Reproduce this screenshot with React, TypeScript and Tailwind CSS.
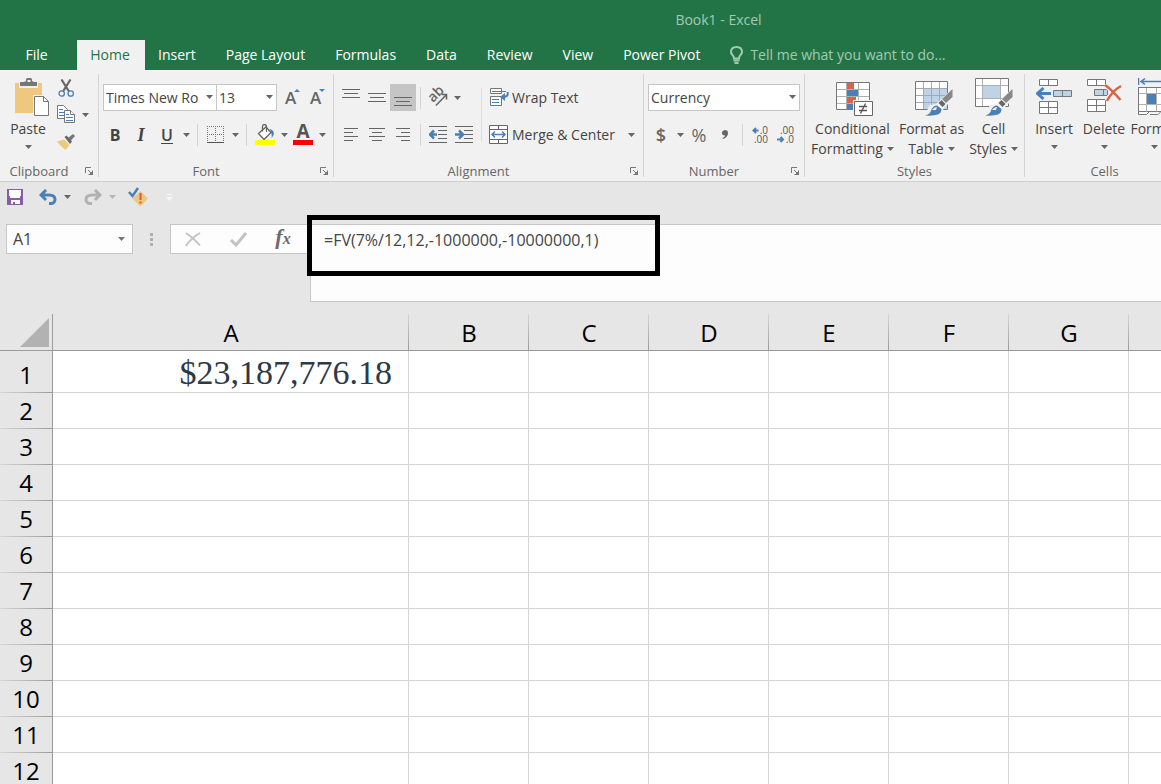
import React, { useState } from "react";

const COLUMNS = ["A", "B", "C", "D", "E", "F", "G", ""];
const ROWS = Array.from({ length: 12 }, (_, i) => i + 1);
const TABS = ["Insert", "Page Layout", "Formulas", "Data", "Review", "View", "Power Pivot"];

const Caret = ({ className = "fill-[#666]" }: { className?: string }) => (
  <svg width="7" height="4" viewBox="0 0 7 4" className={`shrink-0 ${className}`}>
    <path d="M0 0h7L3.500 4z" />
  </svg>
);

const CaretButton = ({ label, faint }: { label: string; faint?: boolean }) => (
  <button type="button" aria-label={label} className="flex h-[27px] w-3 items-center justify-center">
    <Caret className={faint ? "fill-[#b5b5b5]" : "fill-[#666]"} />
  </button>
);

interface IconButtonProps {
  label: string;
  active?: boolean;
  children: React.ReactNode;
}

const IconButton = ({ label, active, children }: IconButtonProps) => (
  <button
    type="button"
    aria-label={label}
    className={`flex h-[27px] w-[26px] shrink-0 items-center justify-center ${active ? "bg-[#c5c5c5]" : ""}`}
  >
    {children}
  </button>
);

const Separator = ({ className = "mx-1" }: { className?: string }) => (
  <span className={`h-[22px] w-px shrink-0 bg-[#d4d4d4] ${className}`} />
);

interface ComboProps {
  label: string;
  value: string;
  className: string;
}

const Combo = ({ label, value, className }: ComboProps) => (
  <div className={`relative h-[27px] ${className}`}>
    <select
      aria-label={label}
      className="h-full w-full appearance-none overflow-hidden border border-[#c6c6c6] bg-white pr-[18px] pl-[2px] text-sm text-[#444]"
    >
      <option>{value}</option>
    </select>
    <Caret className="pointer-events-none absolute top-[11px] right-1 fill-[#666]" />
  </div>
);

interface GroupProps {
  title: string;
  launcher?: boolean;
  className?: string;
  children: React.ReactNode;
}

const Group = ({ title, launcher, className = "", children }: GroupProps) => (
  <section aria-label={title} className={`flex shrink-0 pt-1 ${className}`}>
    <div className="flex min-w-0 grow flex-col pb-[2px]">
      <div className="flex grow px-1">{children}</div>
      <div className="flex h-4 items-center">
        <span className="grow text-center text-[13px] leading-4 text-[#666]">{title}</span>
        {launcher && (
          <button type="button" aria-label={`${title} settings`} className="w-5 pl-[7px]">
            <svg width="8" height="8" viewBox="0 0 8 8" fill="none" stroke="#777">
              <path d="M.5 6V.5H6M3 3l3.500 3.500M7.500 3.500v4h-4" />
              <path d="M7.500 4.500v3h-3z" fill="#777" />
            </svg>
          </button>
        )}
      </div>
    </div>
    <span className="mb-1 w-px bg-[#d4d4d4]" />
  </section>
);

interface BigButtonProps {
  icon: React.ReactNode;
  lines: string[];
  className: string;
}

// Tall ribbon button: a single line puts its caret below, two lines put it beside the second
const BigButton = ({ icon, lines, className }: BigButtonProps) => (
  <button
    type="button"
    className={`flex shrink-0 flex-col items-center pt-1 text-sm leading-5 whitespace-nowrap text-[#444] ${className}`}
  >
    <span className="flex h-[41px] items-start">{icon}</span>
    <span>{lines[0]}</span>
    {lines.length > 1 ? (
      <span className="flex items-center gap-1">
        {lines[1]}
        <Caret />
      </span>
    ) : (
      <span className="flex h-4 items-center">
        <Caret />
      </span>
    )}
  </button>
);

const PasteIcon = () => (
  <svg width="34" height="38" viewBox="0 0 34 38">
    <path d="M0 5h27v30H0z" fill="#edc87e" />
    <path d="M4 3h19v7H4z" fill="#f1f1f1" />
    <path d="M5 4h4l2-1V1.500Q11 0 12.500 0h3Q17 0 17 1.500V3l2 1h3v4H5z" fill="#777" />
    <path d="M12.500 2h3v2h-3z" fill="#f1f1f1" />
    <path d="M18 17h16v21H18z" fill="#f1f1f1" />
    <path d="M19.500 18.500h9l5 5v14h-14z" fill="#fff" stroke="#777" />
    <path d="M28.500 18.500v5h5" fill="none" stroke="#777" />
  </svg>
);

const CutIcon = () => (
  <svg width="17" height="18" viewBox="0 0 17 18" fill="none">
    <path d="M3.500.5l7.500 12M12.500.5l-7.500 12" stroke="#666" strokeWidth="2.200" />
    <circle cx="3.700" cy="14.500" r="2.700" stroke="#4a80b8" strokeWidth="1.300" />
    <circle cx="12.700" cy="14.500" r="2.700" stroke="#4a80b8" strokeWidth="1.300" />
  </svg>
);

const CopyIcon = () => (
  <svg width="18" height="19" viewBox="0 0 18 19" fill="#fff" stroke="#777">
    <path d="M.5.5h6l4 4v9H.5z" />
    <path d="M2 4.500h4M2 7.500h5M2 10.500h5" stroke="#4a80b8" />
    <path d="M7.500 5.500h6l4 4v8h-10z" />
    <path d="M13.500 5.500v4h4" />
    <path d="M9 9.500h3M9 12.500h7M9 15.500h7" stroke="#4a80b8" />
  </svg>
);

const BrushIcon = () => (
  <svg width="18" height="16" viewBox="0 0 18 16">
    <path d="M0 7.500L7 5.500l5.500 5.500L8.500 16Q4 13 0 7.500z" fill="#edc87e" />
    <path d="M7.500 3l2-1.500 5.500 6-2 2.500z" fill="#666" />
    <path d="M11 4l5-4 2 2-4.500 5z" fill="#777" />
  </svg>
);

// Horizontal rules given as [x1, x2] pairs
const Lines = ({ spans, top }: { spans: number[][]; top: number }) => (
  <svg width="18" height="20" viewBox="0 0 18 20" stroke="#666" shapeRendering="crispEdges">
    {spans.map(([from, to], i) => (
      <path key={i} d={`M${from} ${top + i * 4 + 0.5}H${to}`} />
    ))}
  </svg>
);

const ArrowIndent = ({ right }: { right?: boolean }) => (
  <svg width="18" height="17" viewBox="0 0 18 17" fill="none" stroke="#666">
    <path d="M0 .5h18M9 4.500h9M9 8.500h9M9 12.500h9M0 16.500h18" />
    <path
      d={right ? "M0 8.500h7M4 4.500l4 4-4 4" : "M1.500 8.500H8M5 4.500l-4 4 4 4"}
      stroke="#4a80b8"
      strokeWidth="2.500"
    />
  </svg>
);

const OrientationIcon = () => (
  <svg width="20" height="19" viewBox="0 0 20 19" className="overflow-visible">
    <text
      x="5"
      y="15"
      fontSize="14"
      fontWeight="600"
      fill="#666"
      transform="rotate(-45 5 15)"
      fontFamily="Open Sans, sans-serif"
    >
      ab
    </text>
    <path d="M8 17.500L18 7M13.500 6.500H18.500V11.500" fill="none" stroke="#666" strokeWidth="1.600" />
  </svg>
);

const WrapIcon = () => (
  <svg width="20" height="19" viewBox="0 0 20 19" fill="none" stroke="#777">
    <path d="M1.500.5h11v5h-11zM1.500 8.500h11v9h-11z" fill="#fff" />
    <path d="M3 3.500h14M3 11.500h7M3 14.500h7" stroke="#4a80b8" />
    <path d="M18.500 4q1.500 5-5 5" stroke="#4a80b8" strokeWidth="2" />
    <path d="M16 5l-5 4 5 4z" fill="#4a80b8" stroke="none" />
  </svg>
);

const MergeIcon = () => (
  <svg width="20" height="19" viewBox="0 0 20 19" fill="none" stroke="#666">
    <path d="M.5.5h18v18H.5z" fill="#fff" />
    <path d="M0 4.500h19M0 14.500h19M9.500 0v4M9.500 15v4" />
    <path d="M3 9.500h13M6 6.500l-3 3 3 3M13 6.500l3 3-3 3" stroke="#4a80b8" strokeWidth="1.500" />
  </svg>
);

const BordersIcon = () => (
  <svg width="18" height="18" viewBox="0 0 18 18" stroke="#777" shapeRendering="crispEdges">
    <path d="M0 .5h18M0 8.500h18M.5 0v16M8.500 0v16M16.500 0v16" strokeDasharray="1 1" fill="none" />
    <path d="M0 16.500h17" stroke="#555" />
  </svg>
);

const FillIcon = () => (
  <svg width="20" height="21" viewBox="0 0 20 21">
    <path d="M3.500 9.500L11 3l5 5.500-7 7z" fill="#fff" stroke="#666" strokeWidth="1.300" />
    <path d="M7.500 7.500V3q0-2.500 2-2.500t2 2.500v5" fill="none" stroke="#666" strokeWidth="1.300" />
    <path d="M14.500 5q5 1 4.300 5.500l-2 3.500q0-6-2.300-9z" fill="#4a80b8" />
    <path d="M0 16h20v5H0z" fill="#ff0" />
  </svg>
);

const FontColorIcon = () => (
  <svg width="20" height="21" viewBox="0 0 20 21" className="overflow-visible">
    <text x="10" y="14" textAnchor="middle" fontSize="19" fontWeight="700" fill="#555" fontFamily="Open Sans, sans-serif">
      A
    </text>
    <path d="M0 16h20v5H0z" fill="#f00" />
  </svg>
);

const FontSizeIcon = ({ down }: { down?: boolean }) => (
  <svg width="18" height="20" viewBox="0 0 18 20" className="overflow-visible">
    <text x={down ? 1 : 2} y="16" fontSize="17" fontWeight="600" fill="#666" fontFamily="Open Sans, sans-serif">
      A
    </text>
    <path d={down ? "M10 1h6l-3 3z" : "M11 4h6l-3-3z"} fill="#4a80b8" />
  </svg>
);

const DecimalIcon = ({ decrease }: { decrease?: boolean }) => (
  <svg
    width="18"
    height="20"
    viewBox="0 0 18 20"
    fontSize="10"
    fill="#555"
    fontFamily="Open Sans, sans-serif"
    className="overflow-visible"
  >
    <text x="17" y="9" textAnchor="end">
      {decrease ? ".00" : ".0"}
    </text>
    <text x="17" y="18" textAnchor="end">
      {decrease ? ".0" : ".00"}
    </text>
    <path
      d={decrease ? "M0 14.500h6M3.500 12l2.500 2.500L3.500 17" : "M7.500 5.500H2M5 3L2.500 5.500 5 8"}
      fill="none"
      stroke="#4a80b8"
      strokeWidth="2"
    />
  </svg>
);

const ConditionalIcon = () => (
  <svg width="37" height="38" viewBox="0 0 37 38">
    <path d="M.5 4.500h33v27H.5z" fill="#fff" />
    <path d="M11 5h7v6h-7zM11 19h9v6h-9z" fill="#db6346" />
    <path d="M11 12h11v6H11zM11 26h7v5h-7z" fill="#4a80b8" />
    <path d="M1 11.500h32M1 18.500h32M1 25.500h32M10.500 5v26M22.500 5v26" stroke="#b0b0b0" />
    <path d="M.5 4.500h33v27H.5z" fill="none" stroke="#777" />
    <path d="M17 22h20v16H17z" fill="#f1f1f1" />
    <path d="M18.500 23.500h18v14h-18z" fill="#fff" stroke="#666" />
    <path d="M23 28.500h8M23 32.500h8M29.500 25.500l-5 10" stroke="#555" strokeWidth="1.300" />
  </svg>
);

const StyleBrush = () => (
  <>
    <path d="M38 10L21 26l-6 1-6 11h16l4-8 9-9z" fill="#f1f1f1" />
    <path d="M37.500 11v8l-6.500 6-4-4z" fill="#888" />
    <path d="M26.500 22l4 4-3 3-4-4z" fill="#666" />
    <path d="M10 37.500q5-1 6-5 2-5 6-5l4.500 3.500q0 4-3.500 5.500-4 1.500-13 1z" fill="#4a80b8" />
    <path d="M17 32q2-3 5-3l-1 3z" fill="#f1f1f1" />
  </>
);

const FormatTableIcon = () => (
  <svg width="38" height="38" viewBox="0 0 38 38">
    <path d="M.5 3.500h32v28H.5z" fill="#fff" />
    <path d="M9 11h23v20H9z" fill="#bfd3e8" />
    <path d="M1 10.500h31M1 17.500h31M1 24.500h31M8.500 4v27M16.500 4v27M24.500 4v27" stroke="#a8a8a8" />
    <path d="M.5 3.500h32v28H.5z" fill="none" stroke="#777" />
    <StyleBrush />
  </svg>
);

const CellStylesIcon = () => (
  <svg width="38" height="38" viewBox="0 0 38 38">
    <path d="M.5.5h33v28H.5z" fill="#fff" />
    <path d="M8 8h18v13H8z" fill="#bfd3e8" />
    <path d="M1 7.500h32M1 20.500h32M7.500 1v27M25.500 1v27" stroke="#b0b0b0" />
    <path d="M.5.5h33v28H.5z" fill="none" stroke="#777" />
    <StyleBrush />
  </svg>
);

const InsertIcon = () => (
  <svg width="36" height="38" viewBox="0 0 36 38" fill="#fff" stroke="#777">
    <path d="M3.500 1.500h18v6h-18zM12.500 1.500v6M3.500 23.500h18v12h-18zM12.500 23.500v12M3.500 29.500h18" />
    <path d="M17.500 12.500h18v6h-18zM26.500 12.500v6" fill="#bfd3e8" />
    <path d="M15 15.500H2M7.500 10l-6 5.500 6 5.500" fill="none" stroke="#4a80b8" strokeWidth="3" />
  </svg>
);

const DeleteIcon = () => (
  <svg width="36" height="38" viewBox="0 0 36 38" fill="#fff" stroke="#777">
    <path d="M1.500 1.500h18v6h-18zM10.500 1.500v6M1.500 21.500h18v12h-18zM10.500 21.500v12M1.500 27.500h18" />
    <path d="M8.500 11.500h13v6h-13zM17.500 11.500v6" fill="#bfd3e8" />
    <path d="M19 7q7 5 15.500 15M35 8q-9 5-14 15" fill="none" stroke="#f1f1f1" strokeWidth="5" />
    <path d="M19 7q7 5 15.500 15M35 8q-9 5-14 15" fill="none" stroke="#db6346" strokeWidth="2.500" />
  </svg>
);

const FormatIcon = () => (
  <svg width="36" height="38" viewBox="0 0 36 38" fill="#fff" stroke="#777">
    <path d="M.5 0v7M3 3.500h29M7 .5l-4 3 4 3M29 .5l4 3-4 3M35.500 0v7" fill="none" stroke="#4a80b8" strokeWidth="1.500" />
    <path d="M.5 9.500h34v24H.5zM.5 33.500v3h8l3-3M12 36.500h8l3-3" />
    <path d="M.5 15.500h34M.5 26.500h34M8.500 9.500v24M18.500 9.500v24M27.500 9.500v24" stroke="#b0b0b0" />
    <path d="M.5 33V9.500h34V33" fill="none" />
    <path d="M9 16h9v10H9z" fill="#4a80b8" stroke="none" />
  </svg>
);

const Header = () => (
  <header className="bg-[#227447] text-sm text-white">
    <h1 className="h-10 pl-[276px] text-center leading-10 text-[#a3c9b2]">Book1 - Excel</h1>
    <nav className="flex h-[30px] items-stretch whitespace-nowrap">
      <button type="button" className="w-[77px] pr-1">
        File
      </button>
      <button type="button" className="w-[68px] bg-[#f1f1f1] pr-[2px] text-[#227447]">
        Home
      </button>
      <div className="-ml-[2px] flex">
        {TABS.map((tab) => (
          <button key={tab} type="button" className="px-[15px]">
            {tab}
          </button>
        ))}
      </div>
      <label className="flex grow items-center gap-[7px] pl-[15px]">
        <svg width="13" height="18" viewBox="0 0 13 18" fill="none" stroke="#a3c9b2" strokeWidth="2">
          <path d="M4 12.500Q4 10.500 2.500 9 1 7.500 1 6q0-5 5.500-5T12 6q0 1.500-1.500 3Q9 10.500 9 12.500z" />
          <path d="M3.500 14.500h6M4.500 17h4" />
        </svg>
        <input
          aria-label="Tell me what you want to do"
          placeholder="Tell me what you want to do..."
          className="w-60 bg-transparent placeholder:text-[#a3c9b2] focus:outline-none"
        />
      </label>
    </nav>
  </header>
);

const Ribbon = () => (
  <div className="flex h-28 overflow-hidden border-b border-[#cfcfcf] bg-[#f1f1f1]">
    <Group title="Clipboard" launcher className="w-[99px]">
      <BigButton className="w-12" icon={<span className="pl-2"><PasteIcon /></span>} lines={["Paste"]} />
      <div className="flex flex-col pl-px">
        <IconButton label="Cut"><CutIcon /></IconButton>
        <div className="flex">
          <IconButton label="Copy"><CopyIcon /></IconButton>
          <CaretButton label="Copy options" />
        </div>
        <IconButton label="Format Painter"><BrushIcon /></IconButton>
      </div>
    </Group>

    <Group title="Font" launcher className="w-[235px]">
      <div className="flex flex-col gap-[10px] pt-[10px]">
        <div className="flex">
          <Combo label="Font name" value="Times New Roman" className="w-[114px]" />
          <Combo label="Font size" value="13" className="-ml-px w-[61px]" />
          <span className="w-[2px]" />
          <IconButton label="Increase font size"><FontSizeIcon /></IconButton>
          <IconButton label="Decrease font size"><FontSizeIcon down /></IconButton>
        </div>
        <div className="-ml-px flex items-center text-base text-[#444]">
          <IconButton label="Bold"><b>B</b></IconButton>
          <IconButton label="Italic"><i className="font-['Liberation_Serif',serif] text-lg font-bold">I</i></IconButton>
          <IconButton label="Underline"><u className="font-semibold underline-offset-2">U</u></IconButton>
          <CaretButton label="Underline style" />
          <Separator className="mx-[5px]" />
          <IconButton label="Borders"><BordersIcon /></IconButton>
          <CaretButton label="Border style" />
          <Separator className="mx-[5px]" />
          <IconButton label="Fill color"><FillIcon /></IconButton>
          <CaretButton label="Fill color options" />
          <IconButton label="Font color"><FontColorIcon /></IconButton>
          <CaretButton label="Font color options" />
        </div>
      </div>
    </Group>

    <Group title="Alignment" launcher className="w-[310px]">
      <div className="flex flex-col gap-[10px] pt-[10px]">
        <div className="flex items-center">
          <IconButton label="Top align"><Lines top={1} spans={[[0, 18], [2, 16], [0, 18]]} /></IconButton>
          <IconButton label="Middle align"><Lines top={5} spans={[[0, 18], [2, 16], [0, 18]]} /></IconButton>
          <IconButton label="Bottom align" active><Lines top={9} spans={[[0, 18], [2, 16], [0, 18]]} /></IconButton>
          <Separator />
          <IconButton label="Orientation"><OrientationIcon /></IconButton>
          <CaretButton label="Orientation options" />
        </div>
        <div className="flex items-center">
          <IconButton label="Align left"><Lines top={3} spans={[[2, 16], [2, 11], [2, 16], [2, 11]]} /></IconButton>
          <IconButton label="Center"><Lines top={3} spans={[[1, 17], [4, 14], [1, 17], [4, 14]]} /></IconButton>
          <IconButton label="Align right"><Lines top={3} spans={[[2, 16], [7, 16], [2, 16], [7, 16]]} /></IconButton>
          <Separator />
          <IconButton label="Decrease indent"><ArrowIndent /></IconButton>
          <IconButton label="Increase indent"><ArrowIndent right /></IconButton>
        </div>
      </div>
      <span className="mx-1 mt-[14px] h-[54px] w-px bg-[#dedede]" />
      <div className="flex grow flex-col gap-[10px] pt-[10px] pl-[3px] text-sm text-[#444]">
        <button type="button" className="flex h-[27px] items-center gap-[3px]">
          <WrapIcon />
          Wrap Text
        </button>
        <div className="flex items-center justify-between pr-[2px]">
          <button type="button" className="flex h-[27px] items-center gap-[3px]">
            <MergeIcon />
            Merge &amp; Center
          </button>
          <CaretButton label="Merge options" />
        </div>
      </div>
    </Group>

    <Group title="Number" launcher className="w-[161px]">
      <div className="flex grow flex-col gap-[10px] pt-[10px]">
        <Combo label="Number format" value="Currency" className="w-full" />
        <div className="flex items-center text-lg text-[#666]">
          <IconButton label="Accounting format"><span className="font-semibold">$</span></IconButton>
          <CaretButton label="Accounting options" />
          <IconButton label="Percent style">%</IconButton>
          <IconButton label="Comma style">
            <svg width="6" height="9" viewBox="0 0 6 9" fill="#666">
              <path d="M3 0q3 0 3 3 0 4-5 6L.500 8Q3 7 3 5.500 0 5.500 0 3t3-3z" />
            </svg>
          </IconButton>
          <Separator />
          <IconButton label="Increase decimal"><DecimalIcon /></IconButton>
          <IconButton label="Decrease decimal"><DecimalIcon decrease /></IconButton>
        </div>
      </div>
    </Group>

    <Group title="Styles" className="w-[220px]">
      <BigButton className="w-[87px]" icon={<span className="pl-1"><ConditionalIcon /></span>} lines={["Conditional", "Formatting"]} />
      <BigButton className="w-[71px]" icon={<span className="pl-1"><FormatTableIcon /></span>} lines={["Format as", "Table"]} />
      <BigButton className="w-[53px]" icon={<CellStylesIcon />} lines={["Cell", "Styles"]} />
    </Group>

    <Group title="Cells" className="w-[160px]">
      <BigButton className="w-[50px]" icon={<InsertIcon />} lines={["Insert"]} />
      <BigButton className="w-[50px]" icon={<DeleteIcon />} lines={["Delete"]} />
      <BigButton className="w-[50px]" icon={<span className="pl-1"><FormatIcon /></span>} lines={["Format"]} />
    </Group>
  </div>
);

const QuickAccess = () => (
  <div className="flex h-8 items-center px-[2px] pb-[2px]">
    <IconButton label="Save">
      <svg width="16" height="16" viewBox="0 0 16 16">
        <path d="M0 0h16v16H0z" fill="#8a5bab" />
        <path d="M2 1h12v8H2zM4 11h9v4H8v-2H6v2H4z" fill="#fdfdfd" />
        <path d="M2 7h1v2H2zM13 7h1v2h-1z" fill="#8a5bab" />
      </svg>
    </IconButton>
    <span className="w-[7px]" />
    <IconButton label="Undo">
      <svg width="18" height="16" viewBox="0 0 18 16" fill="none" stroke="#4a80b8" strokeWidth="3">
        <path d="M7 1L2 6l5 5M2 6h8q6 0 6 4.500T10 14.500" />
      </svg>
    </IconButton>
    <CaretButton label="Undo history" />
    <span className="w-[7px]" />
    <IconButton label="Redo">
      <svg width="18" height="16" viewBox="0 0 18 16" fill="none" stroke="#b1b1b1" strokeWidth="3">
        <path d="M11 1l5 5-5 5M16 6H8q-6 0-6 4.500t6 4" />
      </svg>
    </IconButton>
    <CaretButton label="Redo history" faint />
    <span className="w-[7px]" />
    <IconButton label="Error checking">
      <svg width="20" height="20" viewBox="0 0 20 20">
        <path d="M12.500 4.500l7 7-7 7.500-7.500-7.500z" fill="#edc87e" stroke="#edc87e" strokeLinejoin="round" />
        <path d="M12.500 6v7M12.500 14.500v2" stroke="#db5a3c" strokeWidth="2" />
        <path d="M1 5l3.500 4L10 1" fill="none" stroke="#4a80b8" strokeWidth="2.500" />
      </svg>
    </IconButton>
    <button type="button" aria-label="Customize toolbar" className="ml-3 flex w-3 flex-col items-center gap-[2px]">
      <span className="h-px w-[5px] bg-[#f6f6f6]" />
      <Caret className="fill-[#f6f6f6]" />
    </button>
  </div>
);

const FormulaBar = () => {
  const [formula, setFormula] = useState("=FV(7%/12,12,-1000000,-10000000,1)");

  return (
    <div className="flex items-start pt-[10px] pb-3 pl-[6px]">
      <div className="relative h-[30px] w-[127px]">
        <input
          aria-label="Name box"
          defaultValue="A1"
          className="h-full w-full border border-[#c6c6c6] bg-[#fdfdfd] px-[6px] text-base text-[#444]"
        />
        <Caret className="pointer-events-none absolute top-[13px] right-2 fill-[#777]" />
      </div>
      <div className="flex h-[30px] w-[37px] flex-col items-center justify-center gap-[2px]">
        <span className="size-[3px] bg-[#b0b0b0]" />
        <span className="size-[3px] bg-[#b0b0b0]" />
        <span className="size-[3px] bg-[#b0b0b0]" />
      </div>
      <div className="flex h-[30px] w-[140px] items-center justify-between border border-r-0 border-[#c6c6c6] bg-[#fdfdfd] pr-[14px] pl-[9px]">
        <IconButton label="Cancel">
          <svg width="16" height="15" viewBox="0 0 16 15" stroke="#c3c3c3" strokeWidth="2" fill="none">
            <path d="M1 1q8 5 14 12.500M15 1Q6 6 1 14" />
          </svg>
        </IconButton>
        <IconButton label="Enter">
          <svg width="17" height="15" viewBox="0 0 17 15" stroke="#c3c3c3" strokeWidth="3" fill="none">
            <path d="M1 8l5 5L16 1" />
          </svg>
        </IconButton>
        <IconButton label="Insert function">
          <span className="font-['Liberation_Serif',serif] text-[22px] leading-5 font-bold text-[#6b6b6b] italic">
            f<span className="text-base">x</span>
          </span>
        </IconButton>
      </div>
      <div className="relative h-[78px] grow">
        <textarea
          aria-label="Formula"
          value={formula}
          onChange={(e) => setFormula(e.target.value)}
          className="block h-full w-full resize-none border border-r-0 border-[#c6c6c6] bg-[#fdfdfd] px-[13px] py-1 text-base leading-[22px] text-[#444] focus:outline-none"
        />
        <span className="pointer-events-none absolute -top-[9px] -left-[3px] h-[61px] w-[353px] border-5 border-black" />
      </div>
    </div>
  );
};

const Sheet = () => (
  <table className="w-full table-fixed border-separate border-spacing-0 bg-white">
    <colgroup>
      <col className="w-[53px]" />
      <col className="w-[356px]" />
      {COLUMNS.slice(2).map((_, i) => (
        <col key={i} className="w-[120px]" />
      ))}
      <col />
    </colgroup>
    <thead>
      <tr className="h-[37px] bg-[#e6e6e6]">
        <th className="border-r border-b border-[#9b9b9b] p-0 pr-[3px] pb-[3px] align-bottom">
          <svg width="29" height="29" viewBox="0 0 29 29" className="ml-auto block fill-[#b2b2b2]">
            <path d="M29 0v29H0z" />
          </svg>
        </th>
        {COLUMNS.map((column, i) => (
          <th
            key={i}
            scope="col"
            className="border-b border-[#9b9b9b] bg-[linear-gradient(to_bottom,#d6d6d6,#9b9b9b)] bg-[length:1px_100%] bg-right bg-no-repeat p-0 pt-[2px] text-2xl leading-[34px] font-normal text-black last:bg-none"
          >
            {column}
          </th>
        ))}
      </tr>
    </thead>
    <tbody>
      {ROWS.map((row) => (
        <tr key={row} className={row === 1 ? "h-[42px]" : "h-9"}>
          <th
            scope="row"
            className="border-r border-[#9b9b9b] bg-[#e6e6e6] bg-[linear-gradient(to_right,#d6d6d6,#9b9b9b)] bg-[length:100%_1px] bg-bottom bg-no-repeat p-0 pb-px align-bottom text-2xl leading-[34px] font-normal text-black"
          >
            {row}
          </th>
          {COLUMNS.map((column, i) => (
            <td
              key={i}
              className="border-r border-b border-[#d4d4d4] p-0 pt-[2px] pr-4 text-right font-['Liberation_Serif',serif] text-[34px] leading-9 text-[#2c3a47] last:border-r-0"
            >
              {row === 1 && column === "A" ? "$23,187,776.18" : null}
            </td>
          ))}
        </tr>
      ))}
    </tbody>
  </table>
);

export default function App() {
  return (
    <div className="h-screen overflow-hidden bg-[#e6e6e6] font-['Open_Sans','Noto_Sans',sans-serif]">
      <Header />
      <Ribbon />
      <QuickAccess />
      <FormulaBar />
      <Sheet />
    </div>
  );
}
